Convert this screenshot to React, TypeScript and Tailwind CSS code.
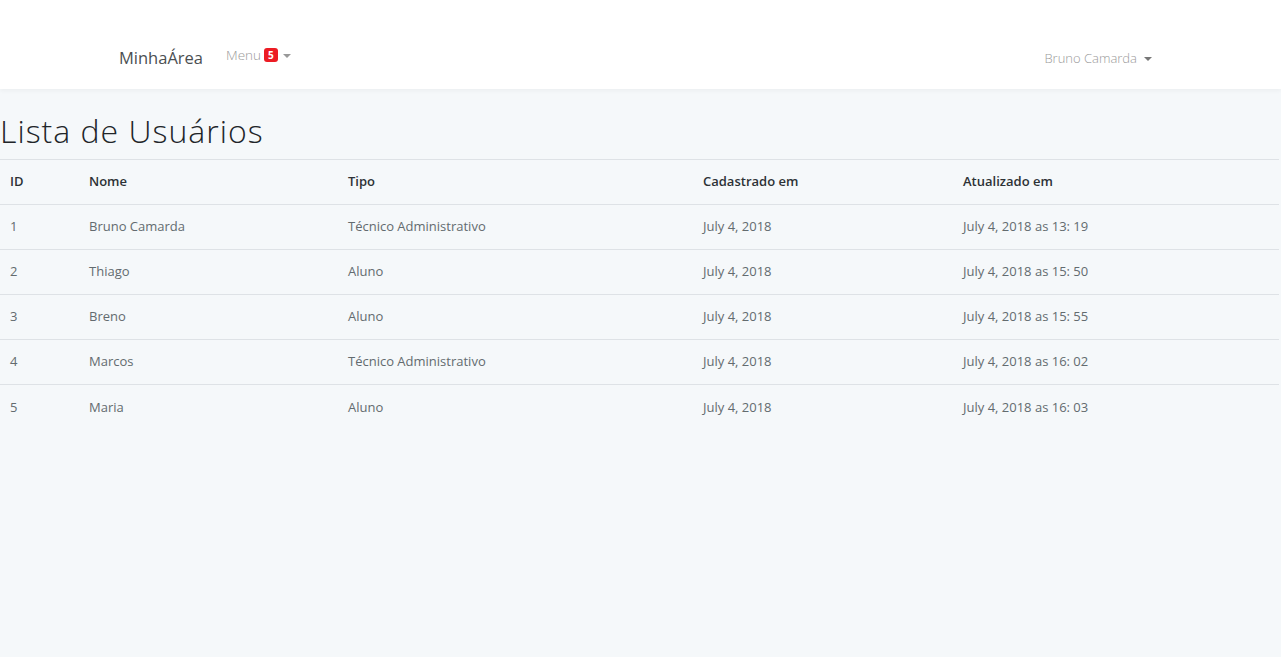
const users = [
  { id: 1, nome: 'Bruno Camarda', tipo: 'Técnico Administrativo', cad: 'July 4, 2018', atu: 'July 4, 2018 as 13: 19' },
  { id: 2, nome: 'Thiago', tipo: 'Aluno', cad: 'July 4, 2018', atu: 'July 4, 2018 as 15: 50' },
  { id: 3, nome: 'Breno', tipo: 'Aluno', cad: 'July 4, 2018', atu: 'July 4, 2018 as 15: 55' },
  { id: 4, nome: 'Marcos', tipo: 'Técnico Administrativo', cad: 'July 4, 2018', atu: 'July 4, 2018 as 16: 02' },
  { id: 5, nome: 'Maria', tipo: 'Aluno', cad: 'July 4, 2018', atu: 'July 4, 2018 as 16: 03' },
]

function Caret() {
  return <span className="ml-[5px] inline-block h-0 w-0 border-x-[4px] border-t-[4px] border-x-transparent border-t-current align-middle" />
}

export default function App() {
  return (
    <div className="min-h-[657px] bg-[#f5f8fa] font-['Open_Sans','Liberation_Sans',sans-serif] text-[13px] text-[#636b6f]">
      {/* navbar */}
      <nav className="flex h-[89px] items-end bg-white pb-[18px] shadow-[0_2px_4px_rgba(0,0,0,0.04)]">
        <div className="flex w-full items-center pl-[119px] pr-[129px]">
          <span className="text-[16.5px] text-[#4b4f52]">MinhaÁrea</span>
          <span className="ml-[23px] -mt-[8px] flex items-center text-[13.5px] font-light text-[#9a9a9a]">
            Menu
            <span className="ml-[3px] rounded-[3px] bg-[#ec1c24] px-[4px] text-[10px] font-bold leading-[14px] text-white">5</span>
            <span className="text-[#999]"><Caret /></span>
          </span>
          <span className="ml-auto flex items-center text-[13px] font-light text-[#9a9a9a]">
            Bruno Camarda
            <span className="ml-[2px] text-[#777]"><Caret /></span>
          </span>
        </div>
      </nav>

      <h2 className="mt-[22px] text-[32px] font-light leading-[40px] tracking-[1px] text-[#212529]">Lista de Usuários</h2>

      <table className="mt-[8px] w-[1279px] table-fixed border-collapse text-left">
        <colgroup>
          <col className="w-[79px]" />
          <col className="w-[259px]" />
          <col className="w-[355px]" />
          <col className="w-[260px]" />
          <col />
        </colgroup>
        <thead>
          <tr className="border-y border-[#dee2e6] text-[13px] text-[#2d3236]">
            <th className="h-[45px] px-[10px] font-semibold">ID</th>
            <th className="px-[10px] font-semibold">Nome</th>
            <th className="px-[10px] font-semibold">Tipo</th>
            <th className="px-[10px] font-semibold">Cadastrado em</th>
            <th className="px-[10px] font-semibold">Atualizado em</th>
          </tr>
        </thead>
        <tbody>
          {users.map((u, i) => (
            <tr key={u.id} className={i < users.length - 1 ? 'border-b border-[#dee2e6]' : ''}>
              <td className="h-[45px] px-[10px]">{u.id}</td>
              <td className="px-[10px]">{u.nome}</td>
              <td className="px-[10px]">{u.tipo}</td>
              <td className="px-[10px]">{u.cad}</td>
              <td className="px-[10px]">{u.atu}</td>
            </tr>
          ))}
        </tbody>
      </table>
    </div>
  )
}
